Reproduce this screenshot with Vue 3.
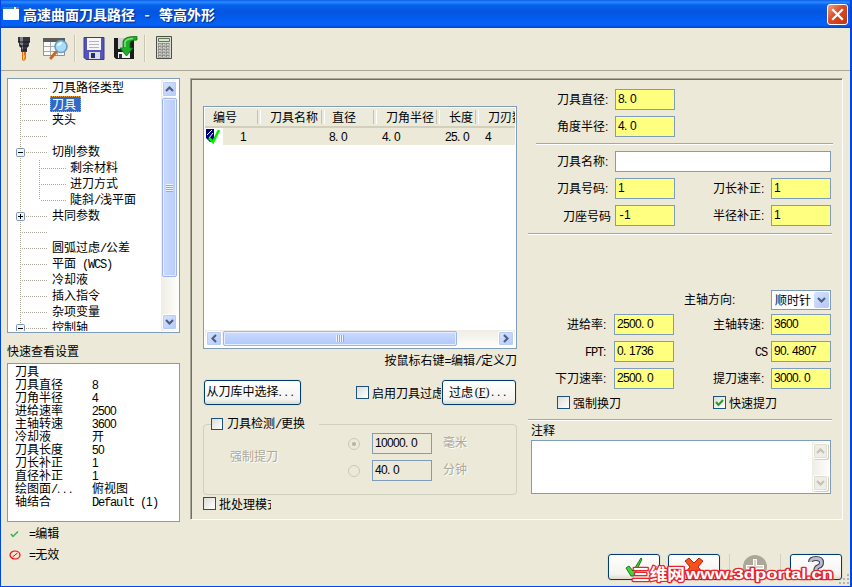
<template>
  <div class="window">
    <header class="titlebar">
      <svg class="app-icon" width="16" height="13" viewBox="0 0 16 13">
        <rect width="16" height="13" rx="1" fill="#fdfdf8" />
        <rect width="16" height="2" fill="#2a80b8" />
        <rect x="11" width="2" height="2" fill="#dff" />
        <rect x="13.5" width="2" height="2" fill="#e8572a" />
      </svg>
      <h1 class="caption">高速曲面刀具路径<span class="dash">-</span>等高外形</h1>
      <button class="close">
        <svg width="21" height="21" viewBox="0 0 21 21">
          <path d="M6 6l9 9M15 6l-9 9" stroke="#fff" stroke-width="2.2" stroke-linecap="square" />
        </svg>
      </button>
    </header>

    <nav class="toolbar">
      <svg class="tool-holder" width="14" height="25" viewBox="0 0 14 25">
        <path d="M1 1h12v5l-1 1v3l-2 2v4H4v-4L2 10V7L1 6z" fill="#393643" />
        <path d="M3 1h3v14H5V10L3 8z" fill="#85828f" />
        <path d="M1 6h12M3 10h8M4 14h6" stroke="#17151d" />
        <path d="M5 16h4v7l-2 2-2-1z" fill="#e66a10" />
        <path d="M6 16h1v3l1 1-1 2 1 1-2 1z" fill="#ffe13a" />
      </svg>
      <svg class="tool-find" width="26" height="23" viewBox="0 0 26 23">
        <path d="M.5 1.500h21v17H.5z" fill="#fafafa" stroke="#909090" />
        <path d="M0 1h22v4H0z" fill="#5a5a5a" />
        <path d="M1 9.500h20M1 14.500h20M7.500 5v13M14.500 5v13" stroke="#a9a9a9" />
        <path d="M13 15l-5 6" stroke="#c06a2c" stroke-width="3" stroke-linecap="round" />
        <circle cx="18" cy="9.500" r="6" fill="#a9dcf6" stroke="#6c9cc2" stroke-width="1.600" />
        <path d="M14 9q1-4 5-4 1 3-5 4z" fill="#e9f8ff" />
      </svg>
      <i class="sep"></i>
      <svg class="tool-save" width="22" height="23" viewBox="0 0 22 23">
        <path d="M1 .5h20v22H3l-2-2z" fill="#5554b8" stroke="#3a3990" />
        <path d="M4 1h14v12H4z" fill="#f5f5fa" />
        <path d="M6 4.500h10M6 7.500h10M6 10.500h10" stroke="#b4b4bf" />
        <path d="M6 15h11v7H6z" fill="#dcdce8" />
        <path d="M8 16h4v5H8z" fill="#2b2a78" />
      </svg>
      <svg class="tool-import" width="24" height="24" viewBox="0 0 24 24">
        <path d="M0 2h20v21H2l-2-2z" fill="#1b1b1d" />
        <path d="M4 2h12v11H4z" fill="#d2d2d2" />
        <path d="M4 16h12v6H4z" fill="#f0f0f0" />
        <path d="M5 18h3v4H5z" fill="#333" />
        <path d="M23 .5q-13-.5-14 5V12H6l6.500 8L19 12h-3V7q0-3 7-3z" fill="#1fae2b" stroke="#0b6d14" stroke-width=".8" />
        <path d="M11 11V6q1-3 8-3.500" stroke="#7fe873" stroke-width="1.500" fill="none" />
      </svg>
      <i class="sep"></i>
      <svg class="tool-calc" width="17" height="24" viewBox="0 0 17 24">
        <path d="M.5.5h15v22H.5z" fill="#d9dbd4" stroke="#4c4e48" />
        <path d="M2.500 2.500h11v3h-11z" fill="#cfeec0" stroke="#66765c" />
        <g fill="#fff" stroke="#80827b" stroke-width=".8">
          <template v-for="r in 5" :key="r">
            <rect v-for="c in 3" :key="c" :x="c * 4 - 1.5" :y="r * 3 + 4.500" width="2.600" height="1.600" />
          </template>
        </g>
      </svg>
    </nav>

    <main class="body">
      <aside class="side">
        <div class="tree box">
          <ul class="nodes">
            <li v-for="(n, i) in tree" :key="i" :class="['node', 'lv' + n.level, { first: i === 0 }]">
              <span class="trunk"></span>
              <svg v-if="n.sign" class="sign" width="9" height="9" viewBox="0 0 9 9">
                <rect x=".5" y=".5" width="8" height="8" rx="1" fill="#f5f3ec" stroke="#7898b5" />
                <path :d="n.sign === '+' ? 'M2 4.500h5M4.500 2v5' : 'M2 4.500h5'" stroke="#000" />
              </svg>
              <span v-if="n.level === 2" :class="['sub-trunk', { last: n.last }]"></span>
              <span class="branch"></span>
              <span v-if="n.text" :class="['text', { selected: n.selected }]"><Txt :t="n.text" /></span>
            </li>
          </ul>
          <div class="vbar">
            <span class="arrow up"><svg width="9" height="6" viewBox="0 0 9 6"><path d="M1 5l3.500-3.500L8 5" /></svg></span>
            <span class="thumb"><i></i></span>
            <span class="arrow down"><svg width="9" height="6" viewBox="0 0 9 6"><path d="M1 1l3.500 3.500L8 1" /></svg></span>
          </div>
        </div>

        <h2 class="side-title">快速查看设置</h2>
        <dl class="quick box">
          <div v-for="q in quick" :key="q[0]" class="quick-row">
            <dt><Txt :t="q[0]" /></dt>
            <dd><Txt :t="q[1]" /></dd>
          </div>
        </dl>

        <p class="legend">
          <svg width="12" height="12" viewBox="0 0 12 12"><path d="M2 6l2 2.500 5-5" fill="none" stroke="#3cb043" stroke-width="1.500" /></svg>
          <Txt t="=编辑" />
        </p>
        <p class="legend">
          <svg width="12" height="12" viewBox="0 0 12 12"><ellipse cx="6" cy="6" rx="5" ry="4" fill="none" stroke="#f00" stroke-width="1.200" /><path d="M3.500 8l5-4" stroke="#f00" /></svg>
          <Txt t="=无效" />
        </p>
      </aside>

      <section class="panel">
        <div class="tools">
          <div class="list box">
            <div class="list-head">
              <span v-for="c in columns" :key="c.name" :style="{ width: c.head + 'px' }">{{ c.name }}</span>
            </div>
            <div class="list-row">
              <svg class="row-icon" width="17" height="17" viewBox="0 0 17 17">
                <path d="M1 1h8v13H5l-4-4z" fill="#00007b" />
                <path d="M2 7l5-5M4 10l4-5" stroke="#fff" />
                <path d="M4 10l4 4 6-12" fill="none" stroke="#00f000" stroke-width="2.600" />
              </svg>
              <span v-for="c in columns" :key="c.name" class="cell" :style="{ width: c.cell + 'px' }"><Txt :t="c.value" /></span>
            </div>
            <div class="hbar">
              <span class="arrow"><svg width="6" height="9" viewBox="0 0 6 9"><path d="M5 1L1.500 4.500 5 8" /></svg></span>
              <span class="thumb"><i></i></span>
              <span class="arrow right"><svg width="6" height="9" viewBox="0 0 6 9"><path d="M1 1l3.500 3.500L1 8" /></svg></span>
            </div>
          </div>

          <p class="hint"><Txt t="按鼠标右键=编辑/定义刀" /></p>

          <div class="actions">
            <button class="btn lib"><Txt t="从刀库中选择..." /></button>
            <span class="check"></span>
            <span class="check-text">启用刀具过虑</span>
            <button class="btn filter">过虑<span class="key">(<u>F</u>)</span><Txt t="..." /></button>
          </div>

          <fieldset class="inspect">
            <legend><span class="check"></span><Txt t="刀具检测/更换" /></legend>
            <div class="inspect-body">
              <span class="off force">强制提刀</span>
              <div class="units">
                <div class="unit">
                  <span class="radio on"></span>
                  <span class="field plain"><Txt t="10000.0" /></span>
                  <span class="off">毫米</span>
                </div>
                <div class="unit">
                  <span class="radio"></span>
                  <span class="field plain"><Txt t="40.0" /></span>
                  <span class="off">分钟</span>
                </div>
              </div>
            </div>
          </fieldset>

          <div class="batch"><span class="check"></span><span class="batch-text">批处理模式</span></div>
        </div>

        <form class="params">
          <div v-for="r in size" :key="r[0]" class="row">
            <label class="lab"><Txt :t="r[0]" /></label>
            <span class="field"><Txt :t="r[1]" /></span>
          </div>
          <hr class="short" />
          <div class="row">
            <label class="lab"><Txt t="刀具名称:" /></label>
            <span class="field name"></span>
          </div>
          <div v-for="r in offsets" :key="r[0]" class="row">
            <label class="lab"><Txt :t="r[0]" /></label>
            <span class="field"><Txt :t="r[1]" /></span>
            <label class="lab2"><Txt :t="r[2]" /></label>
            <span class="field"><Txt :t="r[3]" /></span>
          </div>
          <hr />
          <div class="spindle">
            <label><Txt t="主轴方向:" /></label>
            <span class="select">顺时针<i><svg width="9" height="6" viewBox="0 0 9 6"><path d="M1 1l3.500 3.500L8 1" /></svg></i></span>
          </div>
          <div v-for="r in feeds" :key="r[0]" class="row feed">
            <label class="lab"><Txt :t="r[0]" /></label>
            <span class="field"><Txt :t="r[1]" /></span>
            <label class="lab2"><Txt :t="r[2]" /></label>
            <span class="field"><Txt :t="r[3]" /></span>
          </div>
          <div class="toggles">
            <span class="toggle"><span class="check"></span>强制换刀</span>
            <span class="toggle">
              <span class="check">
                <svg width="11" height="11" viewBox="0 0 11 11"><path d="M2 5l2.500 3L9 3" fill="none" stroke="#21a121" stroke-width="2" /></svg>
              </span>快速提刀
            </span>
          </div>
          <hr />
          <label class="note-label">注释</label>
          <div class="note">
            <div class="vbar off-bar">
              <span class="arrow"><svg width="9" height="6" viewBox="0 0 9 6"><path d="M1 5l3.500-3.500L8 5" /></svg></span>
              <span class="arrow"><svg width="9" height="6" viewBox="0 0 9 6"><path d="M1 1l3.500 3.500L8 1" /></svg></span>
            </div>
          </div>
        </form>
      </section>
    </main>

    <footer class="footer">
      <button class="btn">
        <svg width="22" height="22" viewBox="0 0 22 22"><path d="M3 12l3-2 4 5 8-13 1 1-8 17h-3z" fill="#42d33c" stroke="#157a17" /></svg>
      </button>
      <button class="btn">
        <svg width="22" height="22" viewBox="0 0 22 22"><path d="M2 5l4-3 5 5 5-5 4 3-5 6 5 6-4 3-5-5-5 5-4-3 5-6z" fill="#f4511c" stroke="#b3260a" /></svg>
      </button>
      <span class="btn-off">
        <svg width="24" height="24" viewBox="0 0 24 24"><circle cx="12" cy="12" r="12" fill="#aca899" /><path d="M12 4v16M3 12h18" stroke="#fff" stroke-width="4" /><path d="M12 5v15M4 12h16" stroke="#d9d6c8" stroke-width="2" /></svg>
      </span>
      <button class="btn">
        <svg width="18" height="22" viewBox="0 0 18 22"><path d="M3.500 6q0-3.500 5.500-3.500t5.500 4q0 3-3 4T9 15" fill="none" stroke="#3c3e55" stroke-width="5" /><path d="M3.500 6q0-3.500 5.500-3.500t5.500 4q0 3-3 4T9 15" fill="none" stroke="#b9bccd" stroke-width="2.800" /><circle cx="9" cy="19" r="2" fill="#b9bccd" stroke="#3c3e55" /></svg>
      </button>
    </footer>
    <svg class="grip" width="12" height="12" viewBox="0 0 12 12">
      <path d="M9 1h2v2H9zM5 5h2v2H5zM9 5h2v2H9zM1 9h2v2H1zM5 9h2v2H5zM9 9h2v2H9z" fill="#b8b4a3" />
    </svg>
    <svg class="site" width="210" height="24" viewBox="0 0 210 24">
      <text x="4" y="17" textLength="53" lengthAdjust="spacingAndGlyphs" class="site-cn">三维网</text>
      <text x="58" y="16" textLength="147" lengthAdjust="spacingAndGlyphs" class="site-url">www.3dportal.cn</text>
    </svg>
  </div>
</template>

<script setup>
import { h } from 'vue'

// half-width characters take a fixed 6px cell, full-width ones 12px
const kindOf = (s) => {
  if (/[A-Za-z/()-]/.test(s)) return 'let'
  if (/[0-9=]/.test(s)) return 'num'
  if (/[.: ]/.test(s)) return 'pun'
  return ''
}
const Txt = (props) =>
  h('span', { class: 'txt' }, (props.t.match(/[A-Za-z/()-]+|[0-9=]+|[.: ]+|[^\x00-\x7f]+/g) || [])
    .map((s) => h('span', { class: kindOf(s) }, s)))
Txt.props = ['t']

const tree = [
  { level: 1, text: '刀具路径类型' },
  { level: 1, text: '刀具', selected: true },
  { level: 1, text: '夹头' },
  { level: 1, text: '' },
  { level: 1, text: '切削参数', sign: '-' },
  { level: 2, text: '剩余材料' },
  { level: 2, text: '进刀方式' },
  { level: 2, text: '陡斜/浅平面', last: true },
  { level: 1, text: '共同参数', sign: '+' },
  { level: 1, text: '' },
  { level: 1, text: '圆弧过虑/公差' },
  { level: 1, text: '平面 (WCS)' },
  { level: 1, text: '冷却液' },
  { level: 1, text: '插入指令' },
  { level: 1, text: '杂项变量' },
  { level: 1, text: '控制轴', sign: '-' }
]

const quick = [
  ['刀具', ''],
  ['刀具直径', '8'],
  ['刀角半径', '4'],
  ['进给速率', '2500'],
  ['主轴转速', '3600'],
  ['冷却液', '开'],
  ['刀具长度', '50'],
  ['刀长补正', '1'],
  ['直径补正', '1'],
  ['绘图面/...', '俯视图'],
  ['轴结合', 'Default (1)']
]

// head / cell: distance to the next column's text
const columns = [
  { name: '编号', value: '1', head: 57, cell: 30 },
  { name: '刀具名称', value: '', head: 62, cell: 59 },
  { name: '直径', value: '8.0', head: 54, cell: 53 },
  { name: '刀角半径', value: '4.0', head: 63, cell: 63 },
  { name: '长度', value: '25.0', head: 39, cell: 40 },
  { name: '刀刃数', value: '4', head: 40, cell: 30 }
]

const size = [
  ['刀具直径:', '8.0'],
  ['角度半径:', '4.0']
]
const offsets = [
  ['刀具号码:', '1', '刀长补正:', '1'],
  ['刀座号码', '-1', '半径补正:', '1']
]
const feeds = [
  ['进给率:', '2500.0', '主轴转速:', '3600'],
  ['FPT:', '0.1736', 'CS', '90.4807'],
  ['下刀速率:', '2500.0', '提刀速率:', '3000.0']
]
</script>

<style>
body { margin: 0; overflow: hidden; }
.txt { white-space: pre; }
.txt .num { font-family: "Liberation Sans", sans-serif; letter-spacing: -0.67px; }
.txt .pun { font-family: "Liberation Sans", sans-serif; letter-spacing: 2.6px; }
.txt .let { font-family: "Liberation Mono", monospace; letter-spacing: -1.2px; }
</style>

<style scoped>
* { box-sizing: border-box; }
h1, h2, p, ul, dl, dd, hr { margin: 0; padding: 0; }
ul { list-style: none; }
svg { display: block; flex: none; }

.window {
  position: relative;
  width: 852px;
  height: 587px;
  display: flex;
  flex-direction: column;
  overflow: hidden;
  background: #ece9d8;
  border: solid #0046e0;
  border-width: 0 2px 1px 1px;
  font: 12px/14px "Noto Sans CJK SC", sans-serif;
  color: #000;
}

/* title bar */
.titlebar {
  flex: none;
  height: 28px;
  margin: 0 -2px 0 -1px;
  padding: 0 4px 0 3px;
  display: flex;
  align-items: center;
  background: linear-gradient(#0a5ce8 0, #2a8bff 2px, #0762ee 5px, #0355df 12px, #0460f5 22px, #0660f4 25px, #0243c8 28px);
}
.app-icon { margin-bottom: 1px; }
.caption { flex: 1; margin-left: 4px; font-size: 14px; line-height: 20px; font-weight: 700; color: #fff; text-shadow: 1px 1px 1px #0a2a80; }
.dash { display: inline-block; width: 24px; text-align: center; }
.close { width: 21px; height: 21px; padding: 0; border: 1px solid #fff; border-radius: 3px; background: linear-gradient(135deg, #f0a088, #dd4a22 45%, #c23410); }
.close svg { margin: -1px; }

/* toolbar */
.toolbar {
  flex: none;
  height: 43px;
  padding: 8px 0 0 16px;
  display: flex;
  align-items: flex-start;
  border-bottom: 1px solid #aca899;
}
.sep { width: 2px; height: 27px; margin-top: -1px; border-left: 1px solid #c9c5b2; border-right: 1px solid #f6f4ea; }
.tool-find { margin: 1px 5px 0 12px; }
.tool-save { margin: 1px 9px 0 7px; }
.tool-import { margin-right: 6px; }
.tool-calc { margin-left: 10px; }

.body { display: flex; padding: 7px 0 0 6px; }
.box { background: #fff; border: 1px solid #7f9db9; }

/* left column */
.side { width: 173px; flex: none; }
.tree { height: 255px; display: flex; padding: 1px; overflow: hidden; }
.nodes { flex: 1; height: 251px; overflow: hidden; }
.node { position: relative; height: 16px; display: flex; align-items: center; padding-left: 11px; }
.trunk { width: 1px; height: 16px; background: repeating-linear-gradient(#aca899 0 1px, transparent 1px 2px); }
.first .trunk { height: 8px; align-self: flex-end; }
.sign { position: absolute; left: 7px; top: 4px; }
.branch { width: 27px; height: 1px; background: repeating-linear-gradient(90deg, transparent 0 1px, #aca899 1px 2px); }
.sub-trunk { width: 1px; height: 16px; margin-left: 18px; background: repeating-linear-gradient(#aca899 0 1px, transparent 1px 2px); }
.sub-trunk.last { height: 8px; align-self: flex-start; }
.text { height: 16px; margin-left: 2px; padding: 0 2px; line-height: 14px; white-space: nowrap; }
.lv2 .text { padding-left: 1px; }
.text.selected { height: 16px; padding: 0 4px 0 1px; border: 1px dotted #f0a040; background: #316ac5; color: #fff; line-height: 13px; }

.vbar { flex: none; width: 17px; display: flex; flex-direction: column; background: linear-gradient(90deg, #eeede5, #fefefb); }
.arrow { flex: none; width: 15px; height: 16px; margin: 1px; display: flex; align-items: center; justify-content: center; border: 1px solid #fff; border-radius: 2px; background: linear-gradient(135deg, #d8e4fe, #b5c9f8); box-shadow: inset 0 0 0 1px #b9ccf6; }
.arrow path, .select path { fill: none; stroke: #4d6185; stroke-width: 2.2; }
.thumb { display: flex; align-items: center; justify-content: center; border: 1px solid #9db5ea; border-radius: 2px; box-shadow: inset 0 0 0 1px #e5edff; }
.vbar .thumb { height: 179px; margin: 0 1px; background: linear-gradient(90deg, #cbdafe, #b9cdfb); }
.vbar .thumb i { width: 7px; height: 8px; background: repeating-linear-gradient(#eef4ff 0 1px, #8caaf0 1px 2px); }
.vbar .down { margin-top: auto; }

.side-title { margin-top: 9px; font-size: 12px; line-height: 17px; font-weight: 400; }
.quick { height: 159px; margin-top: 4px; padding: 0 0 0 7px; }
.quick-row { height: 13px; display: flex; line-height: 13px; }
.quick-row dt { width: 77px; }
.legend { height: 21px; display: flex; align-items: center; gap: 8px; padding-left: 2px; }
.quick + .legend { margin-top: 1px; }

/* main panel */
.panel {
  width: 653px;
  height: 442px;
  margin-left: 10px;
  display: flex;
  border: 1px solid #aca899;
  border-right-color: #fff;
  border-bottom-color: #fff;
  box-shadow: inset 1px 1px 0 #716f64;
}
.tools { width: 314px; flex: none; margin: 27px 0 0 12px; }
.list { height: 243px; padding: 1px; display: flex; flex-direction: column; }
.list-head { flex: none; height: 20px; display: flex; align-items: center; padding-left: 8px; overflow: hidden; background: #ebeadb; border-bottom: 2px solid #d2cfbd; }
.list-head span { position: relative; flex: none; white-space: nowrap; }
.list-head span::after { content: ""; position: absolute; right: 9px; top: 0; width: 2px; height: 14px; border-left: 1px solid #c5c2b0; border-right: 1px solid #fff; }
.list-head span:nth-child(2)::after { right: 7px; }
.list-head span:last-child::after { display: none; }
.list-row { height: 17px; display: flex; align-items: center; background: linear-gradient(90deg, #fff 18px, #ece9d8 18px); overflow: hidden; }
.row-icon { margin-right: 18px; }
.cell { flex: none; height: 14px; line-height: 12px; }
.hbar { height: 17px; margin-top: auto; display: flex; background: linear-gradient(#eeede5, #fefefb); }
.hbar .arrow { height: 15px; width: 16px; }
.hbar .thumb { width: 234px; margin: 1px 0; background: linear-gradient(#cbdafe, #b0c8fc); }
.hbar .thumb i { width: 8px; height: 7px; background: repeating-linear-gradient(90deg, #eef4ff 0 1px, #8caaf0 1px 2px); }
.hbar .right { margin-left: auto; }

.hint { height: 14px; margin-top: 4px; text-align: right; line-height: 14px; }
.actions { height: 25px; margin: 13px 0 0 1px; display: flex; align-items: center; }
.btn { height: 26px; padding: 0; display: flex; align-items: center; justify-content: center; overflow: hidden; border: 1px solid #003c74; border-radius: 3px; background: linear-gradient(#fff, #f4f3ee 80%, #dedacb); box-shadow: 0 0 0 1px #e2dfcf; font: inherit; color: #000; white-space: nowrap; }
.actions .btn { height: 25px; }
.lib { width: 97px; padding: 0 2px 2px 0; }
.filter { width: 74px; margin-right: 1px; padding-bottom: 2px; }
.key { width: 18px; font-family: "Liberation Serif", serif; }
.check { flex: none; width: 13px; height: 13px; border: 1px solid #1c5180; background: linear-gradient(135deg, #dcdcd7, #fff); }
.actions .check { margin-left: 55px; }
.check-text { width: 70px; margin-left: 3px; overflow: hidden; white-space: nowrap; }

.inspect { height: 78px; margin: 12px 0 0; padding: 0; min-width: 0; border: 1px solid #d0d0bf; border-radius: 4px; }
.inspect legend { margin-left: 7px; padding: 0 14px 0 0; display: flex; align-items: center; gap: 4px; height: 14px; }
.inspect .check { width: 12px; height: 12px; }
.inspect-body { display: flex; padding-left: 26px; }
.off { color: #aca899; text-shadow: 1px 1px 0 #fff; }
.force { width: 118px; padding-top: 18px; }
.units { margin-top: -1px; }
.unit { height: 27px; display: flex; align-items: center; }
.unit .off { margin-left: 11px; padding-bottom: 3px; }
.radio { width: 12px; height: 12px; margin-right: 12px; display: flex; align-items: center; justify-content: center; border: 1px solid #cac8bb; border-radius: 50%; }
.radio.on::after { content: ""; width: 4px; height: 4px; border-radius: 50%; background: #b5b2a3; }

.field { flex: none; width: 60px; height: 21px; padding-left: 2px; border: 1px solid #7f9db9; background: #ffff80; line-height: 15px; }
.field.plain { background: #ece9d8; }
.batch { height: 13px; display: flex; align-items: center; gap: 3px; margin-top: 2px; }
.batch-text { width: 52px; overflow: hidden; white-space: nowrap; }

/* parameters */
.params { width: 304px; margin: 7px 0 0 11px; }
.params hr { height: 2px; margin: 4px 0; border: 0; border-top: 1px solid #aca899; border-bottom: 1px solid #fff; }
.params .short { margin: 3px -1px 3px 8px; }
.row { height: 27px; display: flex; align-items: center; }
.lab { width: 83px; margin-right: 4px; text-align: right; }
.lab2 { width: 92px; margin-right: 4px; text-align: right; }
.feed .lab { width: 81px; margin-right: 5px; white-space: nowrap; }
.feed .lab2 { width: 93px; }
.name { width: 216px; background: #fff; }
.spindle { height: 22px; margin-top: 54px; display: flex; align-items: center; padding-left: 156px; }
.spindle label { width: 87px; padding-bottom: 2px; }
.select { width: 60px; height: 20px; display: flex; align-items: center; justify-content: space-between; padding: 0 1px 0 3px; border: 1px solid #7f9db9; background: #fff; white-space: nowrap; }
.select i { width: 15px; height: 16px; display: flex; align-items: center; justify-content: center; border-radius: 2px; background: linear-gradient(135deg, #d6e3ff, #b3c7f8); }
.toggles { height: 21px; display: flex; padding-left: 29px; }
.toggle { flex: none; width: 156px; display: flex; align-items: center; gap: 3px; }
.toggle + .toggle { width: 80px; }
.toggles + hr { margin: 6px 0 0; }
.note-label { display: block; height: 19px; padding-left: 3px; line-height: 18px; }
.note { width: 300px; height: 54px; margin-left: 3px; padding: 1px; display: flex; justify-content: flex-end; border: 1px solid #7f9db9; background: #fff; }
.off-bar { justify-content: space-between; }
.off-bar .arrow { background: #efeee6; box-shadow: inset 0 0 0 1px #e0ded0, 1px 1px 0 #d2cfba; }
.off-bar .arrow path { stroke: #c4c2b6; }

/* bottom buttons */
.footer { display: flex; position: absolute; left: 607px; top: 554px; }
.footer .btn, .btn-off { width: 52px; }
.footer .btn + .btn { margin-left: 8px; }
.btn-off { height: 26px; display: flex; align-items: center; justify-content: center; margin: 0 9px; border: solid #d3d0c0; border-width: 0 1px; }
.grip { position: absolute; right: 0; bottom: 1px; }
.site { position: absolute; left: 627px; top: 563px; }
.site text { fill: #fff; stroke: #e8242c; stroke-width: 2.6px; stroke-linejoin: round; paint-order: stroke fill; }
.site-cn { font-size: 16px; font-weight: 700; font-family: "Noto Sans CJK SC", sans-serif; }
.site-url { font-size: 14px; font-weight: 700; font-family: "Liberation Sans", sans-serif; }
</style>
